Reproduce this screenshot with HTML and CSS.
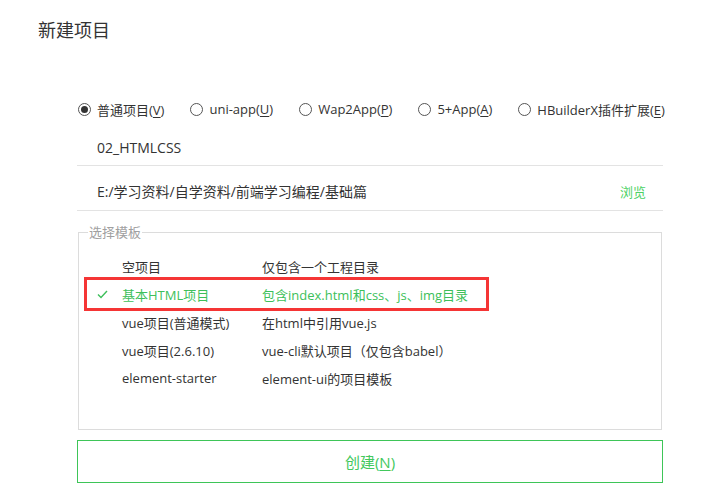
FILE: index.html
```html
<!DOCTYPE html>
<html lang="zh-CN">
<head>
    <meta charset="UTF-8">
    <meta name="viewport" content="width=device-width, initial-scale=1.0">
    <title>新建项目</title>
    <link rel="stylesheet" href="styles.css">
</head>
<body>
    <h1 class="title">新建项目</h1>

    <div class="panel">
        <div class="types">
            <label class="radio checked"><span class="dot"></span><span>普通项目(<u>V</u>)</span></label>
            <label class="radio"><span class="dot"></span><span>uni-app(<u>U</u>)</span></label>
            <label class="radio"><span class="dot"></span><span>Wap2App(<u>P</u>)</span></label>
            <label class="radio"><span class="dot"></span><span>5+App(<u>A</u>)</span></label>
            <label class="radio"><span class="dot"></span><span>HBuilderX插件扩展(<u>E</u>)</span></label>
        </div>

        <div class="field name-field">
            <span>02_HTMLCSS</span>
        </div>
        <div class="field path-field">
            <span>E:/学习资料/自学资料/前端学习编程/基础篇</span>
            <a class="browse">浏览</a>
        </div>

        <fieldset class="templates">
            <legend>选择模板</legend>
            <div class="tpl">
                <span class="tick"></span>
                <span class="tpl-name">空项目</span>
                <span class="tpl-desc">仅包含一个工程目录</span>
            </div>
            <div class="tpl selected">
                <span class="tick">
                    <svg width="11" height="9" viewBox="0 0 11 9"><path d="M1 4.5 L4 7.5 L10 1" fill="none" stroke="#3dbf5a" stroke-width="1.4"/></svg>
                </span>
                <span class="tpl-name">基本HTML项目</span>
                <span class="tpl-desc">包含index.html和css、js、img目录</span>
            </div>
            <div class="tpl">
                <span class="tick"></span>
                <span class="tpl-name">vue项目(普通模式)</span>
                <span class="tpl-desc">在html中引用vue.js</span>
            </div>
            <div class="tpl">
                <span class="tick"></span>
                <span class="tpl-name">vue项目(2.6.10)</span>
                <span class="tpl-desc">vue-cli默认项目（仅包含babel）</span>
            </div>
            <div class="tpl">
                <span class="tick"></span>
                <span class="tpl-name">element-starter</span>
                <span class="tpl-desc">element-ui的项目模板</span>
            </div>
        </fieldset>

        <button class="create">创建(<u>N</u>)</button>
    </div>
</body>
</html>
```

FILE: styles.css
```css
* {
    margin: 0;
    padding: 0;
    box-sizing: border-box;
    font-family: "Open Sans", "Noto Sans CJK SC", sans-serif;
}

body {
    background: #fff;
    color: #333;
    width: 710px;
    height: 493px;
    overflow: hidden;
}

.title {
    font-size: 18px;
    font-weight: normal;
    line-height: 24px;
    padding: 18px 0 0 38px;
    color: #333;
}

.panel {
    width: 586px;
    margin: 57px 0 0 77px;
    font-size: 13px;
}

.types {
    display: flex;
    gap: 26px;
    height: 20px;
    align-items: center;
    padding-left: 1px;
}

.radio {
    display: flex;
    align-items: center;
    gap: 6px;
    white-space: nowrap;
}

.radio u, .create u {
    text-underline-offset: 2px;
}

.dot {
    width: 13px;
    height: 13px;
    border: 1px solid #555;
    border-radius: 50%;
    display: flex;
    align-items: center;
    justify-content: center;
}

.radio.checked .dot::after {
    content: "";
    width: 7px;
    height: 7px;
    border-radius: 50%;
    background: #333;
}

.field {
    display: flex;
    justify-content: space-between;
    align-items: center;
    padding: 0 17px 0 20px;
    border-bottom: 1px solid #e3e3e3;
    font-size: 14px;
}

.name-field {
    height: 47px;
    padding-top: 10px;
}

.path-field {
    height: 45px;
    padding-top: 6px;
}

.browse {
    color: #4cd264;
    font-size: 13px;
}

.templates {
    border: 1px solid #dcdcdc;
    margin: 12px 1px 0 1px;
    padding: 11px 0 37px 8px;
}

.templates legend {
    color: #a0a0a0;
    font-size: 13px;
    line-height: 18px;
    padding: 0 1px;
    margin-left: 1px;
}

.tpl {
    display: flex;
    align-items: center;
    height: 28px;
    width: 399px;
    padding-left: 10px;
}

.tpl.selected {
    color: #3dbf5a;
    outline: 3px solid #f53535;
}

.tick {
    width: 25px;
    display: flex;
    align-items: center;
}

.tpl-name {
    width: 140px;
}

.create {
    display: block;
    width: 586px;
    height: 43px;
    margin-top: 10px;
    background: #fff;
    border: 1px solid #3ec558;
    color: #42c85c;
    font-size: 15px;
    cursor: pointer;
}
```
